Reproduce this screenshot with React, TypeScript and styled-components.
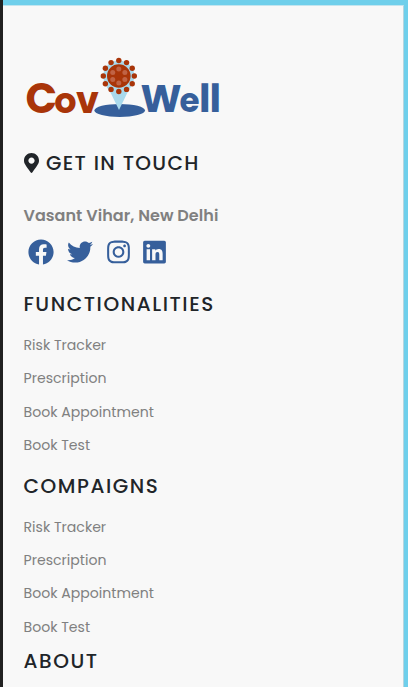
import React from 'react';
import styled, { createGlobalStyle } from 'styled-components';
import { FaFacebook, FaInstagram, FaLinkedin, FaMapMarkerAlt, FaTwitter } from 'react-icons/fa';

const GlobalStyle = createGlobalStyle`
  * { box-sizing: border-box; }
  body { margin: 0; background: #6fcfeb; overflow: hidden; }
`;

const Frame = styled.div`
  height: 687px;
  padding: 5px 4px 0 0;
  background: #6fcfeb;
  border-left: 3px solid #212121;
  font-family: Poppins, Inter, sans-serif;
  overflow: hidden;
`;

const Footer = styled.footer`
  height: 682px;
  padding: 48px 20px 0 20.5px;
  background: #f8f8f8;
  border-top: 1px solid #c3e5ef;
  border-right: 1px solid #b5d5e0;
  overflow: hidden;
`;

const Logo = styled.svg`
  display: block;
  width: 200px;
  height: 70px;
  font-family: Poppins, Lato, sans-serif;
  font-weight: 700;
  overflow: visible;
`;

const Heading = styled.h5<{ $tracking?: number; $top: number }>`
  display: flex;
  align-items: center;
  gap: 7.4px;
  height: 24px;
  margin: ${({ $top }) => $top}px 0 0;
  color: #212529;
  font-size: 20px;
  font-weight: 500;
  line-height: 24px;
  letter-spacing: ${({ $tracking = 1.57 }) => $tracking}px;
  white-space: nowrap;
`;

const Marker = styled(FaMapMarkerAlt)`
  flex: none;
  width: 15px;
  height: 20px;
`;

const Address = styled.p`
  height: 24px;
  margin: 29px 0 0;
  color: #808080;
  font-size: 16px;
  font-weight: 600;
  line-height: 24px;
  letter-spacing: 0.05px;
  white-space: nowrap;
`;

const Social = styled.nav`
  display: flex;
  align-items: center;
  height: 26px;
  margin: 11px 0 0 4px;
  color: #365f9b;
`;

const SocialLink = styled.a<{ $width: number; $gap: number }>`
  display: flex;
  width: ${({ $width }) => $width}px;
  margin-right: ${({ $gap }) => $gap}px;
  svg { display: block; width: 100%; height: 26px; }
`;

const LinkList = styled.ul`
  height: 133px;
  margin: 13px 0 0;
  padding: 0;
  list-style: none;
`;

const LinkItem = styled.li`
  height: 33.3px;
  color: #808080;
  font-size: 14.1px;
  line-height: 33px;
  white-space: nowrap;
`;

const links = ['Risk Tracker', 'Prescription', 'Book Appointment', 'Book Test'];

const ring = (count: number, radius: number) =>
  Array.from({ length: count }, (_, i) => {
    const a = (i * 2 * Math.PI) / count;
    return { x: 94.8 + radius * Math.sin(a), y: 22 - radius * Math.cos(a) };
  });
const spikes = ring(12, 15.5);
const spots = ring(6, 7);

function CovWellLogo() {
  return (
    <Logo viewBox="0 0 200 70" role="img" aria-label="CovWell">
      <ellipse cx="95.7" cy="56.4" rx="25.3" ry="6.5" fill="#365f9b" />
      <path d="M79.3 22a15.5 15.5 0 1 1 31 0c0 6-3.3 10.6-7.3 17.6L95 56 87 39.6C82.4 32.6 79.3 28 79.3 22Z" fill="#a9d9ec" />
      <circle cx="94.8" cy="22" r="11.8" fill="#a93509" />
      {spikes.map((p, i) => <circle key={i} cx={p.x} cy={p.y} r="2.7" fill="#a93509" />)}
      {spots.map((p, i) => <circle key={i} cx={p.x} cy={p.y} r="2.5" fill="#c06345" />)}
      <text y="59" fontSize="41.5" fill="#a93509">
        <tspan x="1.6">C</tspan><tspan x="30.2" fontSize="35">o</tspan><tspan x="52" fontSize="36.5">v</tspan>
      </text>
      <text y="58" fontSize="39" fill="#365f9b">
        <tspan x="116.4">W</tspan><tspan x="155.6" fontSize="32.5">e</tspan><tspan x="174.9">l</tspan><tspan x="185.6">l</tspan>
      </text>
    </Logo>
  );
}

function Links() {
  return (
    <LinkList>
      {links.map((label) => <LinkItem key={label}>{label}</LinkItem>)}
    </LinkList>
  );
}

export default function App() {
  return (
    <>
      <GlobalStyle />
      <Frame>
        <Footer>
          <CovWellLogo />
          <Heading $tracking={1.35} $top={27}>
            <Marker />
            GET IN TOUCH
          </Heading>
          <Address>Vasant Vihar, New Delhi</Address>
          <Social>
            <SocialLink $width={26} $gap={13}><FaFacebook /></SocialLink>
            <SocialLink $width={26} $gap={14}><FaTwitter /></SocialLink>
            <SocialLink $width={23} $gap={13}><FaInstagram /></SocialLink>
            <SocialLink $width={23} $gap={0}><FaLinkedin /></SocialLink>
          </Social>
          <Heading $top={27}>FUNCTIONALITIES</Heading>
          <Links />
          <Heading $top={11.8}>COMPAIGNS</Heading>
          <Links />
          <Heading $top={5.2}>ABOUT</Heading>
        </Footer>
      </Frame>
    </>
  );
}
